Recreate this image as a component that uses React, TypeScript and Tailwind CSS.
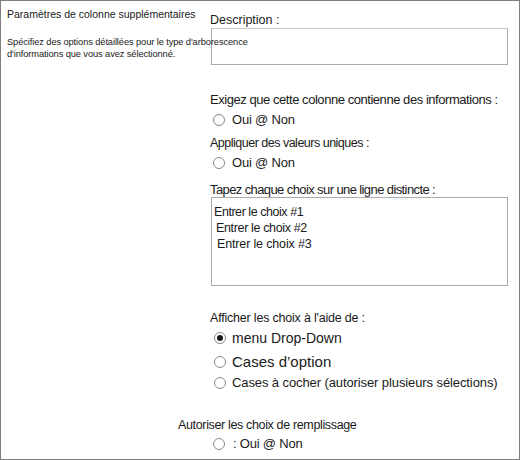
import React from "react";

function Radio({ checked = false }: { checked?: boolean }) {
  return (
    <span className="flex h-[12px] w-[12px] shrink-0 items-center justify-center rounded-full border border-[#8a8a8a] bg-white">
      {checked && <span className="block h-[6px] w-[6px] rounded-full bg-[#1a1a1a]" />}
    </span>
  );
}

export default function App() {
  return (
    <div
      className="h-[460px] w-[520px] overflow-hidden border border-[#7f7f7f] bg-white text-[#1a1a1a]"
      style={{ fontFamily: '"Liberation Sans", Arial, sans-serif' }}
    >
      <div className="flex">
        <div className="w-[209px] shrink-0 whitespace-nowrap pl-[6px] pt-[5px]">
          <div className="text-[10.5px] leading-[16px]">Paramètres de colonne supplémentaires</div>
          <div className="relative z-10 mt-[14px] text-[9.3px] leading-[12px] tracking-[-0.1px]">
            <div>Spécifiez des options détaillées pour le type d'arborescence</div>
            <div>d'informations que vous avez sélectionné.</div>
          </div>
        </div>
        <div className="w-[298px] shrink-0">
          <div className="mt-[11px] text-[12.5px] leading-[16px]">Description :</div>
          <div className="ml-[1px] h-[37px] w-[297px] border border-[#ababab] border-t-[#c8c8c8]" />

          <div className="mt-[27px] whitespace-nowrap text-[13px] leading-[16px] tracking-[-0.45px]">
            Exigez que cette colonne contienne des informations :
          </div>
          <div className="mt-[3px] flex h-[18px] items-center gap-[7px] pl-[3px] text-[13px] tracking-[-0.2px]">
            <Radio />
            <span>Oui @ Non</span>
          </div>

          <div className="mt-[6px] text-[12.5px] leading-[16px] tracking-[-0.5px]">Appliquer des valeurs uniques :</div>
          <div className="mt-[3px] flex h-[18px] items-center gap-[7px] pl-[3px] text-[13px] tracking-[-0.2px]">
            <Radio />
            <span>Oui @ Non</span>
          </div>

          <div className="mt-[10px] whitespace-nowrap text-[13px] leading-[15px] tracking-[-0.6px]">
            Tapez chaque choix sur une ligne distincte :
          </div>
          <div className="ml-[1px] h-[89px] w-[297px] border border-[#ababab] pt-[6px] text-[12.5px] leading-[16px]">
            <div className="pl-[2px] tracking-[-0.45px]">Entrer le choix #1</div>
            <div className="pl-[4px] tracking-[-0.35px]">Entrer le choix #2</div>
            <div className="pl-[5px] tracking-[-0.15px]">Entrer le choix #3</div>
          </div>

          <div className="mt-[24px] text-[12.5px] leading-[16px] tracking-[-0.2px]">Afficher les choix à l'aide de :</div>
          <div className="mt-[2px] flex h-[20px] items-center gap-[6px] pl-[4px] text-[14px]">
            <Radio checked />
            <span>menu Drop-Down</span>
          </div>
          <div className="mt-[4px] flex h-[20px] items-center gap-[6px] pl-[4px] text-[15px]">
            <Radio />
            <span>Cases d’option</span>
          </div>
          <div className="mt-[1px] flex h-[20px] items-center gap-[6px] pl-[4px] whitespace-nowrap text-[13px] tracking-[-0.1px]">
            <Radio />
            <span>Cases à cocher (autoriser plusieurs sélections)</span>
          </div>
        </div>
      </div>

      <div className="mt-[24px] pl-[177px]">
        <div className="text-[12.5px] leading-[16px] tracking-[-0.35px]">Autoriser les choix de remplissage</div>
        <div className="mt-[1px] flex h-[20px] items-center gap-[8px] pl-[35px] text-[13px] tracking-[-0.2px]">
          <Radio />
          <span>: Oui @ Non</span>
        </div>
      </div>
    </div>
  );
}
